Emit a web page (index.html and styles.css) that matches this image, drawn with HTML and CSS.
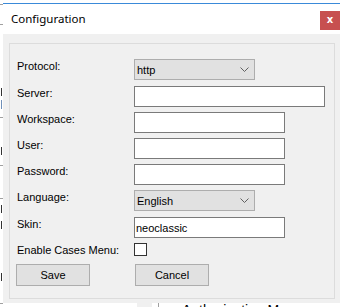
FILE: index.html
```html
<!DOCTYPE html>
<html lang="en">
    <head>
        <meta charset="UTF-8" />
        <meta name="viewport" content="width=device-width, initial-scale=1.0" />
        <title>Configuration</title>
        <link rel="stylesheet" href="styles.css">
    </head>
    <body>
        <div class="desktop">
            <!-- bits of the window behind the dialog -->
            <div class="behind">
                <span class="mark line" style="top: 4px;"></span>
                <span class="mark line" style="top: 24px;"></span>
                <span class="mark glyph" style="top: 88px; height: 8px;"></span>
                <span class="mark glyph blue" style="top: 100px; height: 9px;"></span>
                <span class="mark line" style="top: 117px;"></span>
                <span class="mark glyph" style="top: 147px; height: 8px;"></span>
                <span class="mark line" style="top: 165px;"></span>
                <span class="mark line" style="top: 198px;"></span>
                <span class="mark glyph" style="top: 205px; height: 8px;"></span>
                <span class="mark glyph" style="top: 221px; height: 8px;"></span>
                <span class="mark glyph" style="top: 273px; height: 8px;"></span>
                <span class="mark line" style="top: 303px;"></span>
                <div class="tab-block"></div>
                <div class="tab-line"></div>
                <div class="behind-title">Authorization Manager</div>
            </div>

            <div class="window">
                <div class="titlebar">
                    <span class="title">Configuration</span>
                    <span class="close">x</span>
                </div>
                <div class="window-body">
                    <div class="group">
                        <div class="form">
                            <label class="label">Protocol:</label>
                            <div class="combo">
                                <span>http</span>
                                <svg width="9" height="5" viewBox="0 0 9 5"><path d="M0.5 0.5 L4.5 4.5 L8.5 0.5" fill="none" stroke="#606060" stroke-width="1"/></svg>
                            </div>

                            <label class="label">Server:</label>
                            <input class="field wide" type="text">

                            <label class="label">Workspace:</label>
                            <input class="field" type="text">

                            <label class="label">User:</label>
                            <input class="field" type="text">

                            <label class="label">Password:</label>
                            <input class="field" type="password">

                            <label class="label">Language:</label>
                            <div class="combo">
                                <span>English</span>
                                <svg width="9" height="5" viewBox="0 0 9 5"><path d="M0.5 0.5 L4.5 4.5 L8.5 0.5" fill="none" stroke="#606060" stroke-width="1"/></svg>
                            </div>

                            <label class="label">Skin:</label>
                            <input class="field" type="text" value="neoclassic">

                            <label class="label">Enable Cases Menu:</label>
                            <span class="check"></span>

                            <button class="button save">Save</button>
                            <button class="button cancel">Cancel</button>
                        </div>
                    </div>
                </div>
            </div>
        </div>
    </body>
</html>
```

FILE: styles.css
```css
body {
    margin: 0;
    background-color: #fff;
    font-family: "Liberation Sans", Arial, sans-serif;
}
.desktop {
    position: relative;
    width: 340px;
    height: 307px;
    overflow: hidden;
    background-color: #fff;
}
.behind .mark {
    position: absolute;
    left: 0;
    background-color: #a0a0a0;
}
.behind .line {
    width: 3px;
    height: 1px;
}
.behind .glyph {
    left: 1px;
    width: 1px;
    background-color: #333;
}
.behind .glyph.blue {
    background-color: #6f8fb8;
}
.tab-block {
    position: absolute;
    left: 137px;
    top: 303px;
    width: 15px;
    height: 4px;
    background-color: #f0f0f0;
}
.tab-line {
    position: absolute;
    left: 158px;
    top: 303px;
    width: 1px;
    height: 4px;
    background-color: #a0a0a0;
}
.behind-title {
    position: absolute;
    left: 182px;
    top: 303px;
    font-size: 14px;
    line-height: 14px;
    color: #000;
    white-space: nowrap;
}
.window {
    position: absolute;
    left: 3px;
    top: 3px;
    width: 337px;
    height: 300px;
    border-top: 1px solid #3a8ad9;
    box-sizing: border-box;
    display: flex;
    flex-direction: column;
    background-color: #f0f0f0;
}
.titlebar {
    height: 30px;
    background-color: #fff;
    display: flex;
    justify-content: space-between;
    align-items: flex-start;
    padding-left: 8px;
}
.title {
    font-family: "Noto Sans", sans-serif;
    font-size: 11.5px;
    line-height: 30px;
    color: #000;
}
.close {
    margin-top: 7px;
    width: 20px;
    height: 19px;
    background-color: #c75050;
    color: #fff;
    font-family: "DejaVu Sans", sans-serif;
    font-weight: bold;
    font-size: 10px;
    line-height: 18px;
    text-align: center;
}
.window-body {
    flex: 1;
    padding: 9px 0 0 6px;
}
.group {
    width: 326px;
    height: 256px;
    border: 1px solid #dcdcdc;
    box-sizing: border-box;
    padding: 15px 0 0 7px;
}
.form {
    display: grid;
    grid-template-columns: 117px 1fr;
    grid-template-rows: 27px 26px 26px 26px 26px 27px 26px 21px 22px;
    align-items: start;
    font-size: 11px;
    color: #000;
}
.label {
    padding-top: 1px;
    white-space: nowrap;
}
.combo {
    width: 121px;
    height: 21px;
    box-sizing: border-box;
    border: 1px solid #adadad;
    background-color: #e1e1e1;
    display: flex;
    align-items: center;
    justify-content: space-between;
    padding: 0 5px 0 2px;
    color: #000;
}
.field {
    width: 151px;
    height: 21px;
    box-sizing: border-box;
    border: 1px solid #7a7a7a;
    background-color: #fff;
    padding: 0 1px;
    margin: 0;
    font-family: "Liberation Sans", Arial, sans-serif;
    font-size: 11px;
    color: #000;
    outline: none;
}
.field.wide {
    width: 191px;
}
.check {
    width: 13px;
    height: 13px;
    box-sizing: border-box;
    border: 1px solid #333;
    background-color: #fff;
}
.button {
    width: 74px;
    height: 22px;
    box-sizing: border-box;
    border: 1px solid #adadad;
    background-color: #e1e1e1;
    font-family: "Liberation Sans", Arial, sans-serif;
    font-size: 11px;
    color: #000;
    padding: 0;
    margin: 0;
}
.button.save {
    margin-left: -1px;
}
.button.cancel {
    margin-left: 1px;
}
```
